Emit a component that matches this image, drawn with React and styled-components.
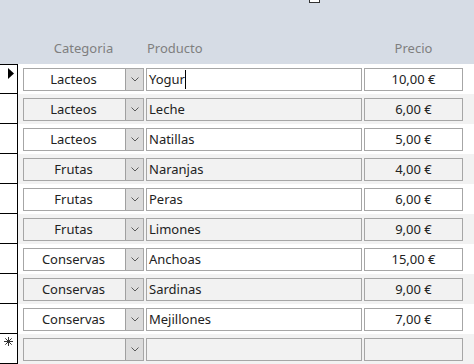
import React from "react";
import styled, { createGlobalStyle } from "styled-components";

const Global = createGlobalStyle`
  html, body { margin: 0; padding: 0; background: #ffffff; }
  body { width: 474px; height: 364px; overflow: hidden; font-family: "Noto Sans", "Open Sans", sans-serif; }
`;

const Page = styled.div`
  position: relative;
  width: 474px;
  height: 364px;
  overflow: hidden;
  background: #ffffff;
`;

const Header = styled.div`
  height: 64px;
  background: #d6dce5;
  display: flex;
  align-items: flex-end;
  box-sizing: border-box;
  padding: 0 0 7px 23px;
`;

const HeadLabel = styled.div`
  width: ${(p) => p.$w}px;
  margin-right: ${(p) => p.$mr || 0}px;
  text-align: ${(p) => p.$align || "left"};
  padding-left: ${(p) => p.$pl || 0}px;
  box-sizing: border-box;
  color: #7f7f7f;
  font-size: 13px;
  line-height: 18px;
`;

const TopBox = styled.div`
  position: absolute;
  left: 309px;
  top: -8px;
  width: 9px;
  height: 9px;
  border: 1px solid #333;
  background: #fff;
`;

const Row = styled.div`
  display: flex;
  height: 30px;
  background: ${(p) => (p.$alt ? "#f2f2f2" : "#ffffff")};
`;

const Selector = styled.div`
  position: relative;
  width: 18px;
  flex: none;
  box-sizing: border-box;
  background: #ffffff;
  border-right: 1px solid #000;
  border-bottom: 1px solid #000;
  border-top: ${(p) => (p.$first ? "1px solid #000" : "none")};
  height: 30px;
`;

const Cells = styled.div`
  display: flex;
  gap: 2px;
  padding: 4px 0 0 5px;
  align-items: flex-start;
`;

const Box = styled.div`
  box-sizing: border-box;
  height: 23px;
  border: 1px solid #a6a6a6;
  font-size: 13px;
  line-height: 21px;
  color: #222222;
  white-space: nowrap;
  overflow: hidden;
`;

const Combo = styled(Box)`
  width: 121px;
  display: flex;
`;

const ComboText = styled.div`
  flex: 1;
  text-align: center;
  padding-right: 2px;
`;

const DropButton = styled.div`
  width: 18px;
  flex: none;
  box-sizing: border-box;
  border-left: 1px solid #a0a0a0;
  background: #dcdcdc;
  display: flex;
  align-items: center;
  justify-content: center;
`;

const TextField = styled(Box)`
  width: 216px;
  padding-left: 2px;
  position: relative;
`;

const PriceField = styled(Box)`
  width: 99px;
  text-align: center;
`;

const Caret = styled.span`
  display: inline-block;
  width: 1px;
  height: 19px;
  background: #000;
  vertical-align: -5px;
`;

const Chevron = () => (
  <svg width="8" height="5" viewBox="0 0 8 5">
    <path d="M0.5 0.5 L4 4 L7.5 0.5" fill="none" stroke="#595959" strokeWidth="1" />
  </svg>
);

const Pointer = () => (
  <svg width="6" height="11" viewBox="0 0 6 11" style={{ position: "absolute", left: 8, top: 3 }}>
    <path d="M0 0 L6 5.5 L0 11 Z" fill="#000" />
  </svg>
);

const Star = () => (
  <svg width="9" height="9" viewBox="0 0 9 9" style={{ position: "absolute", left: 4, top: 3 }}>
    <g stroke="#333" strokeWidth="1">
      <line x1="4.5" y1="0" x2="4.5" y2="9" />
      <line x1="0" y1="4.5" x2="9" y2="4.5" />
      <line x1="1.3" y1="1.3" x2="7.7" y2="7.7" />
      <line x1="7.7" y1="1.3" x2="1.3" y2="7.7" />
    </g>
  </svg>
);

const data = [
  ["Lacteos", "Yogur", "10,00 €"],
  ["Lacteos", "Leche", "6,00 €"],
  ["Lacteos", "Natillas", "5,00 €"],
  ["Frutas", "Naranjas", "4,00 €"],
  ["Frutas", "Peras", "6,00 €"],
  ["Frutas", "Limones", "9,00 €"],
  ["Conservas", "Anchoas", "15,00 €"],
  ["Conservas", "Sardinas", "9,00 €"],
  ["Conservas", "Mejillones", "7,00 €"],
];

export default function App() {
  return (
    <Page>
      <Global />
      <TopBox />
      <Header>
        <HeadLabel $w={121} $mr={2} $align="center">Categoria</HeadLabel>
        <HeadLabel $w={216} $mr={2} $pl={1}>Producto</HeadLabel>
        <HeadLabel $w={99} $align="center">Precio</HeadLabel>
      </Header>
      {data.map(([cat, prod, price], i) => (
        <Row key={i} $alt={i % 2 === 1}>
          <Selector $first={i === 0}>{i === 0 && <Pointer />}</Selector>
          <Cells>
            <Combo>
              <ComboText>{cat}</ComboText>
              <DropButton><Chevron /></DropButton>
            </Combo>
            <TextField>
              {prod}
              {i === 0 && <Caret />}
            </TextField>
            <PriceField>{price}</PriceField>
          </Cells>
        </Row>
      ))}
      <Row $alt>
        <Selector><Star /></Selector>
        <Cells>
          <Combo>
            <ComboText />
            <DropButton><Chevron /></DropButton>
          </Combo>
          <TextField />
          <PriceField />
        </Cells>
      </Row>
    </Page>
  );
}
